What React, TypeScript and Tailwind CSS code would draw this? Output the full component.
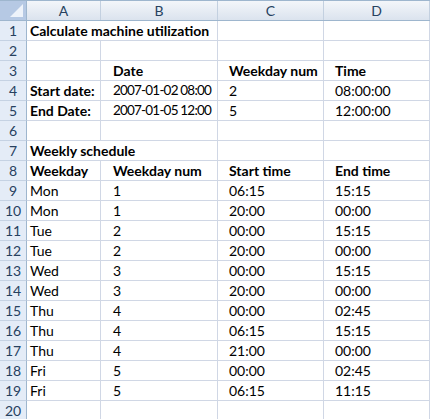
import React from 'react';

type Row = {
  cells: string[];
  bold?: boolean;
  boldA?: boolean;
  span?: boolean;
};

const rows: Row[] = [
  { cells: ['Calculate machine utilization', '', '', ''], bold: true, span: true },
  { cells: ['', '', '', ''] },
  { cells: ['', 'Date', 'Weekday num', 'Time'], bold: true },
  { cells: ['Start date:', '2007-01-02 08:00', '2', '08:00:00'], boldA: true },
  { cells: ['End Date:', '2007-01-05 12:00', '5', '12:00:00'], boldA: true },
  { cells: ['', '', '', ''] },
  { cells: ['Weekly schedule', '', '', ''], bold: true, span: true },
  { cells: ['Weekday', 'Weekday num', 'Start time', 'End time'], bold: true },
  { cells: ['Mon', '1', '06:15', '15:15'] },
  { cells: ['Mon', '1', '20:00', '00:00'] },
  { cells: ['Tue', '2', '00:00', '15:15'] },
  { cells: ['Tue', '2', '20:00', '00:00'] },
  { cells: ['Wed', '3', '00:00', '15:15'] },
  { cells: ['Wed', '3', '20:00', '00:00'] },
  { cells: ['Thu', '4', '00:00', '02:45'] },
  { cells: ['Thu', '4', '06:15', '15:15'] },
  { cells: ['Thu', '4', '21:00', '00:00'] },
  { cells: ['Fri', '5', '00:00', '02:45'] },
  { cells: ['Fri', '5', '06:15', '11:15'] },
  { cells: ['', '', '', ''] },
];

const widths = ['w-[74px]', 'w-[117px]', 'w-[106px]', 'w-[106px]'];
const pads = ['pl-[3px]', 'pl-[12px]', 'pl-[11px]', 'pl-[11px]'];

function ColHeader({ label, w }: { label: string; w: string }) {
  return (
    <div
      className={`${w} shrink-0 h-full flex items-center justify-center border-r border-[#c3d0e0] bg-gradient-to-b from-[#f3f6fa] to-[#dbe3ee] text-[#27415f]`}
    >
      {label}
    </div>
  );
}

export default function App() {
  return (
    <div
      className="w-[430px] h-[419px] overflow-hidden bg-white text-[14px] text-black leading-none"
      style={{ fontFamily: 'Lato, "Open Sans", sans-serif' }}
    >
      {/* column headers */}
      <div className="flex h-[21px] border-t border-b border-[#9eb6ce]">
        <div className="w-[27px] shrink-0 h-full border-r border-[#9eb6ce] bg-[#b6c9e4] relative">
          <div className="absolute right-[3px] bottom-[3px] w-0 h-0 border-l-[13px] border-l-transparent border-b-[13px] border-b-[#eef3fa]" />
        </div>
        <ColHeader label="A" w="w-[74px]" />
        <ColHeader label="B" w="w-[117px]" />
        <ColHeader label="C" w="w-[106px]" />
        <ColHeader label="D" w="w-[106px]" />
      </div>

      {rows.map((row, i) => (
        <div key={i} className="flex h-[20px]">
          <div className="w-[27px] shrink-0 h-full flex items-center justify-center border-r border-r-[#9eb6ce] border-b border-b-[#c5d2e3] bg-[#e4ecf7] text-[#27415f] text-[14px]">
            {i + 1}
          </div>
          {row.span ? (
            <>
              <div className="w-[191px] shrink-0 h-full flex items-center whitespace-nowrap border-r border-b border-[#d0d7e5] pl-[3px] font-bold">
                {row.cells[0]}
              </div>
              <div className="w-[106px] shrink-0 h-full border-r border-b border-[#d0d7e5]" />
              <div className="w-[106px] shrink-0 h-full border-r border-b border-[#d0d7e5]" />
            </>
          ) : (
            row.cells.map((c, j) => (
              <div
                key={j}
                className={`${widths[j]} ${pads[j]} shrink-0 h-full flex items-center whitespace-pre overflow-hidden border-r border-b border-[#d0d7e5] ${
                  row.bold || (row.boldA && j === 0) ? 'font-bold' : ''
                } ${c.includes('-') ? 'text-[13.5px] tracking-[-0.8px]' : ''}`}
              >
                {c}
              </div>
            ))
          )}
        </div>
      ))}
    </div>
  );
}
